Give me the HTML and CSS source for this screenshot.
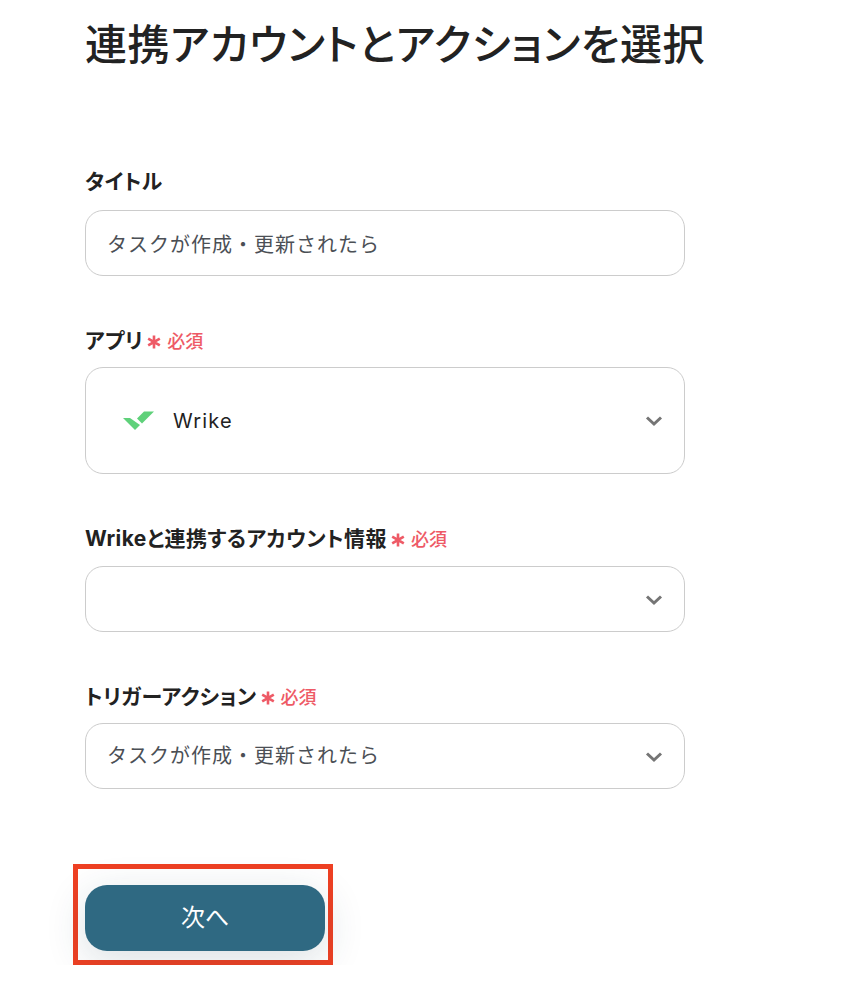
FILE: index.html
```html
<!DOCTYPE html>
<html lang="ja">
<head>
    <meta charset="UTF-8">
    <meta name="viewport" content="width=device-width, initial-scale=1.0">
    <title>連携アカウントとアクションを選択</title>
    <link rel="stylesheet" href="styles.css">
</head>
<body>
    <div class="page">
        <h1 class="page-title">連携アカウントとアクションを選択</h1>

        <div class="field field-title">
            <div class="field-label">タイトル</div>
            <div class="field-box">タスクが作成・更新されたら</div>
        </div>

        <div class="field field-app">
            <div class="field-label">アプリ<span class="required"><svg class="required-mark" width="14" height="14" viewBox="0 0 14 14"><path d="M7 0.5 V13.5 M1.2 3.6 L12.8 10.4 M12.8 3.6 L1.2 10.4" fill="none" stroke="#ee5a66" stroke-width="2.6"/></svg>必須</span></div>
            <div class="field-box field-box-app">
                <svg class="app-logo" width="32" height="20" viewBox="0 0 32 20">
                    <path d="M0 7 L7 7 L17 14 L12 19 Z" fill="#5fd17a"/>
                    <path d="M14 7.5 L21 0.5 L31 0.5 L19 12.5 Z" fill="#5fd17a"/>
                </svg>
                <span class="app-name">Wrike</span>
                <svg class="chevron" width="18" height="12" viewBox="0 0 18 12"><path d="M2 2.5 L9 9 L16 2.5" fill="none" stroke="#757575" stroke-width="3"/></svg>
            </div>
        </div>

        <div class="field field-account">
            <div class="field-label">Wrikeと連携するアカウント情報<span class="required"><svg class="required-mark" width="14" height="14" viewBox="0 0 14 14"><path d="M7 0.5 V13.5 M1.2 3.6 L12.8 10.4 M12.8 3.6 L1.2 10.4" fill="none" stroke="#ee5a66" stroke-width="2.6"/></svg>必須</span></div>
            <div class="field-box">
                <svg class="chevron" width="18" height="12" viewBox="0 0 18 12"><path d="M2 2.5 L9 9 L16 2.5" fill="none" stroke="#757575" stroke-width="3"/></svg>
            </div>
        </div>

        <div class="field field-trigger">
            <div class="field-label">トリガーアクション<span class="required"><svg class="required-mark" width="14" height="14" viewBox="0 0 14 14"><path d="M7 0.5 V13.5 M1.2 3.6 L12.8 10.4 M12.8 3.6 L1.2 10.4" fill="none" stroke="#ee5a66" stroke-width="2.6"/></svg>必須</span></div>
            <div class="field-box">
                <span class="trigger-value">タスクが作成・更新されたら</span>
                <svg class="chevron" width="18" height="12" viewBox="0 0 18 12"><path d="M2 2.5 L9 9 L16 2.5" fill="none" stroke="#757575" stroke-width="3"/></svg>
            </div>
        </div>

        <div class="next-highlight">
            <button class="next-button">次へ</button>
        </div>
    </div>
</body>
</html>
```

FILE: styles.css
```css
body {
    margin: 0;
    background-color: #ffffff;
    color: #222222;
    font-family: "Inter", "Noto Sans CJK JP", sans-serif;
}

.page {
    padding: 18px 0 0 85px;
    width: 600px;
}

.page-title {
    margin: 0;
    font-size: 42px;
    line-height: 54px;
    font-weight: 500;
    font-feature-settings: "palt";
    letter-spacing: 0.55px;
    white-space: nowrap;
}

.field-title {
    margin-top: 96px;
}

.field-title .field-label {
    margin-bottom: 16px;
}

.field-app {
    margin-top: 51px;
}

.field-account {
    margin-top: 51px;
}

.field-account .field-label {
    margin-bottom: 15px;
}

.field-account .chevron,
.field-trigger .chevron {
    margin-top: 2px;
}

.field-trigger {
    margin-top: 51px;
}

.trigger-value {
    padding-bottom: 4px;
}

.field-label {
    display: flex;
    align-items: center;
    box-sizing: border-box;
    height: 26px;
    padding-bottom: 2px;
    margin-bottom: 14px;
    font-size: 21px;
    font-weight: 700;
    font-feature-settings: "palt";
    letter-spacing: 0.4px;
    white-space: nowrap;
}

.required {
    display: flex;
    align-items: center;
    margin-top: 2px;
    margin-left: 4px;
    color: #ee5a66;
    font-size: 18px;
    font-weight: 500;
    letter-spacing: 0;
}

.required-mark {
    margin-top: 4px;
    margin-right: 6px;
}

.field-box {
    display: flex;
    align-items: center;
    box-sizing: border-box;
    height: 66px;
    padding: 0 22px 0 21px;
    border: 1px solid #cccccc;
    border-radius: 18px;
    color: #4b4f55;
    font-size: 20px;
    letter-spacing: 1px;
}

.field-box-app {
    height: 107px;
    padding-left: 37px;
}

.app-name {
    margin-left: 18px;
    color: #222222;
    letter-spacing: 1.2px;
}

.chevron {
    margin-left: auto;
    margin-right: -1px;
}

.next-highlight {
    box-sizing: border-box;
    width: 260px;
    height: 101px;
    margin: 75px 0 0 -12px;
    padding: 16px 7px 0;
    border: 5px solid #ee4023;
}

.next-button {
    display: block;
    width: 240px;
    height: 66px;
    padding: 0 0 5px;
    border: none;
    border-radius: 22px;
    background-color: #2f6982;
    box-shadow: 0 10px 40px rgba(30, 60, 80, 0.16);
    color: #ffffff;
    font-family: inherit;
    font-size: 24px;
    cursor: pointer;
}
```
